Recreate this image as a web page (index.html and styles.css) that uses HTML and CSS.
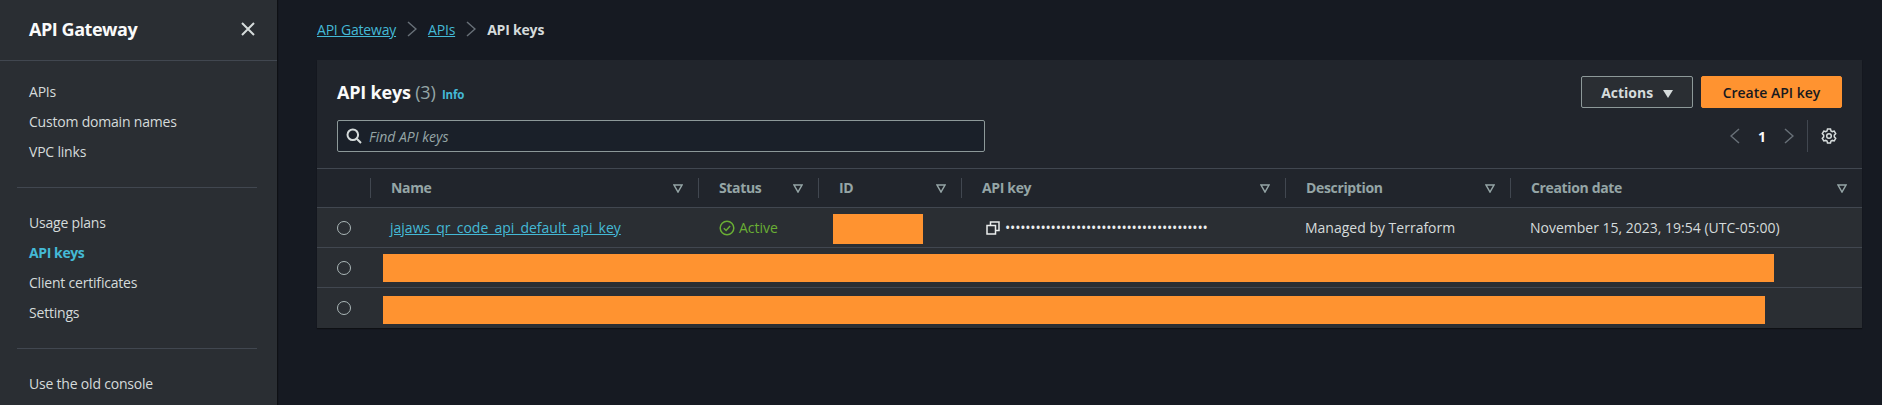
FILE: index.html
```html
<!DOCTYPE html>
<html lang="en">

<head>
    <meta charset="UTF-8">
    <title>API keys</title>
    <link rel="stylesheet" href="styles.css">
</head>

<body>
    <aside class="sidebar">
        <header class="side-head">
            <h2>API Gateway</h2>
            <svg class="close" width="16" height="16" viewBox="0 0 16 16"><path d="M2 2l12 12M14 2L2 14" /></svg>
        </header>
        <nav class="side-nav">
            <ul>
                <li>APIs</li>
                <li>Custom domain names</li>
                <li>VPC links</li>
            </ul>
            <hr>
            <ul>
                <li>Usage plans</li>
                <li class="current">API keys</li>
                <li>Client certificates</li>
                <li>Settings</li>
            </ul>
            <hr>
            <ul>
                <li>Use the old console</li>
            </ul>
        </nav>
    </aside>

    <main class="content">
        <div class="crumbs">
            <a href="#">API Gateway</a>
            <svg width="10" height="16" viewBox="0 0 10 16"><path d="M1 1l8 7-8 7" /></svg>
            <a href="#">APIs</a>
            <svg width="10" height="16" viewBox="0 0 10 16"><path d="M1 1l8 7-8 7" /></svg>
            <strong>API keys</strong>
        </div>

        <section class="panel">
            <div class="panel-top">
                <div class="panel-left">
                    <h1>API keys <span class="count">(3)</span> <a class="info" href="#">Info</a></h1>
                    <div class="search">
                        <svg width="16" height="16" viewBox="0 0 16 16"><circle cx="6.8" cy="6.8" r="5.3" /><path d="M10.8 10.8l4.2 4.2" /></svg>
                        <span>Find API keys</span>
                    </div>
                </div>
                <div class="panel-right">
                    <div class="buttons">
                        <button class="btn">Actions <i class="caret"></i></button>
                        <button class="btn primary">Create API key</button>
                    </div>
                    <div class="pager">
                        <svg class="arrow" width="10" height="16" viewBox="0 0 10 16"><path d="M9 1L1 8l8 7" /></svg>
                        <b>1</b>
                        <svg class="arrow" width="10" height="16" viewBox="0 0 10 16"><path d="M1 1l8 7-8 7" /></svg>
                        <span class="pager-line"></span>
                        <svg class="gear" width="16" height="16" viewBox="0 0 16 16">
                            <circle cx="8" cy="8" r="2.3" />
                            <path d="M6.500 1h3l.5 1.900 1.300.7 1.900-.5 1.500 2.600-1.400 1.400v1.800l1.400 1.400-1.500 2.600-1.900-.5-1.300.7-.5 1.900h-3L6 13.100l-1.300-.7-1.900.5-1.500-2.600 1.400-1.400V7.100L1.300 5.700l1.500-2.600 1.900.5L6 2.900z" />
                        </svg>
                    </div>
                </div>
            </div>

            <div class="row head">
                <div></div>
                <div class="th"><span>Name</span><svg class="filter" width="10" height="9" viewBox="0 0 10 9"><path d="M1 1h8L5 8z" /></svg></div>
                <div class="th"><span>Status</span><svg class="filter" width="10" height="9" viewBox="0 0 10 9"><path d="M1 1h8L5 8z" /></svg></div>
                <div class="th"><span>ID</span><svg class="filter" width="10" height="9" viewBox="0 0 10 9"><path d="M1 1h8L5 8z" /></svg></div>
                <div class="th"><span>API key</span><svg class="filter" width="10" height="9" viewBox="0 0 10 9"><path d="M1 1h8L5 8z" /></svg></div>
                <div class="th"><span>Description</span><svg class="filter" width="10" height="9" viewBox="0 0 10 9"><path d="M1 1h8L5 8z" /></svg></div>
                <div class="th"><span>Creation date</span><svg class="filter" width="10" height="9" viewBox="0 0 10 9"><path d="M1 1h8L5 8z" /></svg></div>
            </div>

            <div class="row">
                <div class="pick"><i class="radio"></i></div>
                <div class="td"><a href="#">jajaws_qr_code_api_default_api_key</a></div>
                <div class="td status">
                    <svg width="16" height="16" viewBox="0 0 16 16"><circle cx="8" cy="8" r="6.800" /><path d="M4.800 8.200l2.300 2.300 4-4.500" /></svg>
                    Active
                </div>
                <div class="td"><span class="hide hide-id"></span></div>
                <div class="td key">
                    <svg width="14" height="14" viewBox="0 0 14 14"><path d="M1 4.500h8.500V13H1zM4.500 4.500V1H13v8.500H9.500" /></svg>
                    <span class="dots">••••••••••••••••••••••••••••••••••••••••</span>
                </div>
                <div class="td">Managed by Terraform</div>
                <div class="td">November 15, 2023, 19:54 (UTC-05:00)</div>
            </div>

            <div class="row blank">
                <div class="pick"><i class="radio"></i></div>
                <span class="hide hide-row1"></span>
            </div>

            <div class="row blank last">
                <div class="pick"><i class="radio"></i></div>
                <span class="hide hide-row2"></span>
            </div>
        </section>
    </main>
</body></html>
```

FILE: styles.css
```css
* {
    box-sizing: border-box;
    padding: 0;
    margin: 0;
}

body {
    display: flex;
    height: 405px;
    overflow: hidden;
    background: #161a22;
    color: #d5dbdb;
    font-family: "Open Sans", "Liberation Sans", sans-serif;
    font-size: 14px;
}

a {
    color: #44b9d6;
}

svg {
    flex: none;
    fill: none;
    stroke: currentColor;
}

/* sidebar */
.sidebar {
    width: 277px;
    flex: none;
    background: #2a2e33;
    box-shadow: 1px 0 1px #0e1014;
}

.side-head {
    display: flex;
    justify-content: space-between;
    align-items: center;
    height: 61px;
    padding: 0 21px 2px 29px;
    border-bottom: 1px solid #414750;
}

.side-head h2 {
    font-size: 18px;
    font-weight: 700;
    letter-spacing: -.45px;
    color: #fafafa;
}

.close {
    stroke: #d5dbdb;
    stroke-width: 2;
}

.side-nav {
    padding-top: 16px;
    letter-spacing: -.2px;
}

.side-nav ul {
    list-style: none;
    padding-left: 29px;
}

.side-nav li {
    height: 30px;
    line-height: 30px;
}

.side-nav hr {
    border: 0;
    border-top: 1px solid #414750;
    margin: 20px 20px 20px 17px;
}

.side-nav .current {
    color: #44b9d6;
    font-weight: 700;
    letter-spacing: -.4px;
}

/* main */
.content {
    flex: 1;
    padding: 20px 20px 0 40px;
}

.crumbs {
    display: flex;
    align-items: center;
    gap: 11px;
    height: 18px;
    margin-bottom: 22px;
    letter-spacing: -.2px;
}

.crumbs svg {
    color: #687078;
    stroke-width: 1.500;
}

.crumbs strong {
    color: #d5dbdb;
}

.panel {
    background: #21252c;
    box-shadow: 0 1px 1px #0e1014;
}

.panel-top {
    display: flex;
    justify-content: space-between;
    height: 108px;
    padding: 16px 20px 0 20px;
}

.panel-left h1 {
    font-size: 18px;
    font-weight: 700;
    letter-spacing: -.2px;
    color: #fafafa;
    line-height: 24px;
    margin-top: 4px;
}

.count {
    font-weight: 400;
    color: #95a5a6;
}

.info {
    font-size: 11.500px;
    font-weight: 700;
    text-decoration: none;
    margin-left: 2px;
}

.search {
    display: flex;
    align-items: center;
    gap: 7px;
    width: 648px;
    height: 32px;
    margin-top: 13px;
    padding-left: 8px;
    background: #1a2029;
    border: 1px solid #8d9999;
    border-radius: 2px;
    color: #95a5a6;
    font-style: italic;
}

.search svg {
    color: #d5dbdb;
    stroke-width: 2;
}

.panel-right {
    display: flex;
    flex-direction: column;
    align-items: flex-end;
}

.buttons {
    display: flex;
    gap: 8px;
}

.btn {
    height: 32px;
    width: 112px;
    border: 1px solid #8d9999;
    border-radius: 2px;
    background: #2a2e33;
    color: #d5dbdb;
    font: 700 14px "Open Sans", "Liberation Sans", sans-serif;
}

.btn.primary {
    width: 141px;
    background: #ff9330;
    border-color: #ff9330;
    color: #16191f;
    font-weight: 600;
}

.caret {
    display: inline-block;
    margin-left: 6px;
    border: 5px solid transparent;
    border-top: 8px solid #d5dbdb;
    border-bottom: 0;
}

.pager {
    display: flex;
    align-items: center;
    height: 32px;
    margin-top: 12px;
    color: #fafafa;
    padding-right: 5px;
}

.pager b {
    margin: 0 18px;
}

.arrow {
    color: #687078;
    stroke-width: 1.500;
}

.pager-line {
    width: 1px;
    height: 32px;
    margin: 0 13px;
    background: #414750;
}

.gear {
    color: #d5dbdb;
    stroke-width: 1.500;
}

/* table */
.row {
    position: relative;
    display: grid;
    grid-template-columns: 53px 328px 120px 143px 324px 225px 352px;
    height: 40px;
    background: #2a2e33;
    border-top: 1px solid #414750;
    align-items: center;
}

.row.head {
    height: 39px;
    background: #21252c;
    color: #95a5a6;
    font-weight: 700;
    letter-spacing: -.35px;
}

.row.last {
    height: 41px;
}

.th {
    display: flex;
    justify-content: space-between;
    align-items: center;
    height: 20px;
    padding: 0 15px 0 20px;
    border-left: 1px solid #414750;
}

.th span {
    margin-top: -2px;
}

.filter {
    stroke: #95a5a6;
    stroke-width: 1.500;
}

.pick {
    padding-left: 20px;
}

.radio {
    display: block;
    width: 14px;
    height: 14px;
    border: 1px solid #aab7b8;
    border-radius: 50%;
}

.td {
    display: flex;
    align-items: center;
    padding-left: 20px;
}

.status {
    gap: 4px;
    color: #69ae34;
    padding-left: 21px;
}

.status svg {
    stroke-width: 1.500;
}

.key {
    gap: 5px;
    color: #eaeded;
    padding-left: 25px;
}

.key svg {
    stroke-width: 1.500;
}

.dots {
    letter-spacing: -.2px;
}

.hide {
    display: block;
    background: #ff9330;
}

.hide-id {
    width: 90px;
    height: 30px;
    margin: 2px 0 0 -5px;
}

.hide-row1,
.hide-row2 {
    position: absolute;
    left: 66px;
    top: 6px;
    height: 28px;
}

.hide-row1 {
    width: 1391px;
}

.hide-row2 {
    width: 1382px;
    top: 8px;
}
```
